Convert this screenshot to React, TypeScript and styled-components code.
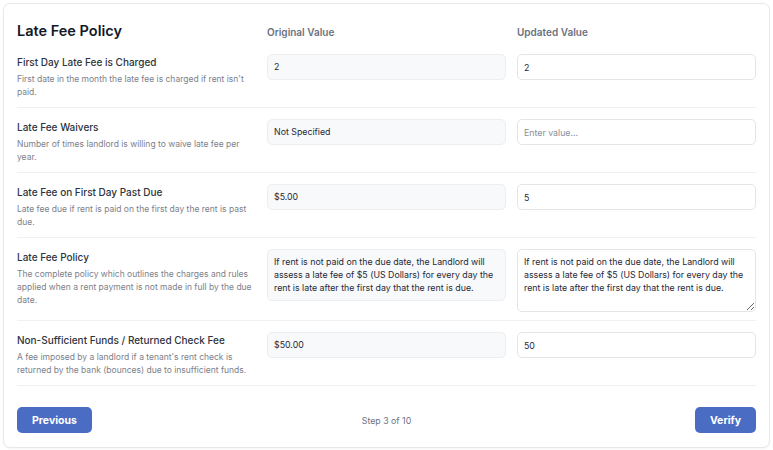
import React from "react";
import styled, { createGlobalStyle } from "styled-components";

interface Field {
  id: string;
  label: string;
  description: string;
  original: string;
  updated: string;
  multiline?: boolean;
}

const fields: Field[] = [
  {
    id: "first-day",
    label: "First Day Late Fee is Charged",
    description: "First date in the month the late fee is charged if rent isn't paid.",
    original: "2",
    updated: "2",
  },
  {
    id: "waivers",
    label: "Late Fee Waivers",
    description: "Number of times landlord is willing to waive late fee per year.",
    original: "Not Specified",
    updated: "",
  },
  {
    id: "first-day-fee",
    label: "Late Fee on First Day Past Due",
    description: "Late fee due if rent is paid on the first day the rent is past due.",
    original: "$5.00",
    updated: "5",
  },
  {
    id: "policy",
    label: "Late Fee Policy",
    description:
      "The complete policy which outlines the charges and rules applied when a rent payment is not made in full by the due date.",
    original:
      "If rent is not paid on the due date, the Landlord will assess a late fee of $5 (US Dollars) for every day the rent is late after the first day that the rent is due.",
    updated:
      "If rent is not paid on the due date, the Landlord will assess a late fee of $5 (US Dollars) for every day the rent is late after the first day that the rent is due.",
    multiline: true,
  },
  {
    id: "nsf",
    label: "Non-Sufficient Funds / Returned Check Fee",
    description:
      "A fee imposed by a landlord if a tenant's rent check is returned by the bank (bounces) due to insufficient funds.",
    original: "$50.00",
    updated: "50",
  },
];

const font = `Inter, "Noto Sans", "Liberation Sans", sans-serif`;

const GlobalStyle = createGlobalStyle`
  * { box-sizing: border-box; }
  body {
    margin: 0;
    background: #ffffff;
    font-family: ${font};
    color: #1f2937;
  }
`;

const Page = styled.div`
  padding: 3px;
`;

const Card = styled.div`
  width: 767px;
  background: #fff;
  border: 1px solid #e7e8eb;
  border-radius: 7px;
  box-shadow: 0 1px 2px rgba(0, 0, 0, 0.04);
  padding: 13px 13px 14px;
`;

const Grid = styled.div`
  display: grid;
  grid-template-columns: 239px 239px 239px;
  column-gap: 11px;
`;

const Header = styled(Grid)`
  height: 26px;
  align-items: center;
`;

const Title = styled.h1`
  margin: 0;
  font-size: 14.5px;
  font-weight: 600;
  color: #111827;
`;

const ColumnHeading = styled.div`
  font-size: 10px;
  font-weight: 600;
  color: #6b7280;
  padding-top: 3px;
`;

const Row = styled(Grid)`
  padding: 11px 0 8px;
  border-bottom: 1px solid #f0f1f3;
  align-items: start;
`;

const Label = styled.div`
  font-size: 10px;
  line-height: 16px;
  font-weight: 500;
  color: #2d3440;
`;

const Description = styled.div`
  margin-top: 3px;
  font-size: 8.5px;
  line-height: 13px;
  color: #7c818a;
`;

const fieldBase = `
  width: 100%;
  font-family: ${font};
  font-size: 8.8px;
  color: #1f2937;
  border-radius: 5px;
  border: 1px solid #e3e5e9;
`;

const ReadOnly = styled.div<{ $multiline?: boolean }>`
  ${fieldBase}
  background: #f8f9fa;
  border-color: #eceef1;
  padding: ${(p) => (p.$multiline ? "5px 6px 6px" : "0 6px")};
  height: ${(p) => (p.$multiline ? "auto" : "26px")};
  line-height: ${(p) => (p.$multiline ? "13px" : "24px")};
  display: ${(p) => (p.$multiline ? "block" : "flex")};
  align-items: center;
`;

const Input = styled.input`
  ${fieldBase}
  height: 26px;
  padding: 0 6px;
  background: #fff;
  outline: none;

  &::placeholder {
    color: #8a8f98;
  }
`;

const TextArea = styled.textarea`
  ${fieldBase}
  display: block;
  height: 63px;
  padding: 5px 6px;
  line-height: 13px;
  background: #fff;
  resize: vertical;
  outline: none;
`;

const Footer = styled.div`
  display: grid;
  grid-template-columns: 1fr auto 1fr;
  align-items: center;
  margin-top: 21px;
`;

const Button = styled.button<{ $width: number; $end?: boolean }>`
  width: ${(p) => p.$width}px;
  height: 26px;
  justify-self: ${(p) => (p.$end ? "end" : "start")};
  border: none;
  border-radius: 5px;
  background: #4b6cc3;
  color: #fff;
  font-family: ${font};
  font-size: 10.5px;
  font-weight: 700;
  cursor: pointer;
`;

const StepText = styled.span`
  font-size: 8.8px;
  color: #6b7280;
`;

export default function App() {
  return (
    <>
      <GlobalStyle />
      <Page>
        <Card>
          <Header>
            <Title>Late Fee Policy</Title>
            <ColumnHeading>Original Value</ColumnHeading>
            <ColumnHeading>Updated Value</ColumnHeading>
          </Header>
          {fields.map((f) => (
            <Row key={f.id}>
              <div>
                <Label>{f.label}</Label>
                <Description>{f.description}</Description>
              </div>
              <ReadOnly $multiline={f.multiline}>{f.original}</ReadOnly>
              {f.multiline ? (
                <TextArea defaultValue={f.updated} />
              ) : (
                <Input defaultValue={f.updated} placeholder="Enter value..." />
              )}
            </Row>
          ))}
          <Footer>
            <Button $width={75}>Previous</Button>
            <StepText>Step 3 of 10</StepText>
            <Button $width={61} $end>
              Verify
            </Button>
          </Footer>
        </Card>
      </Page>
    </>
  );
}
